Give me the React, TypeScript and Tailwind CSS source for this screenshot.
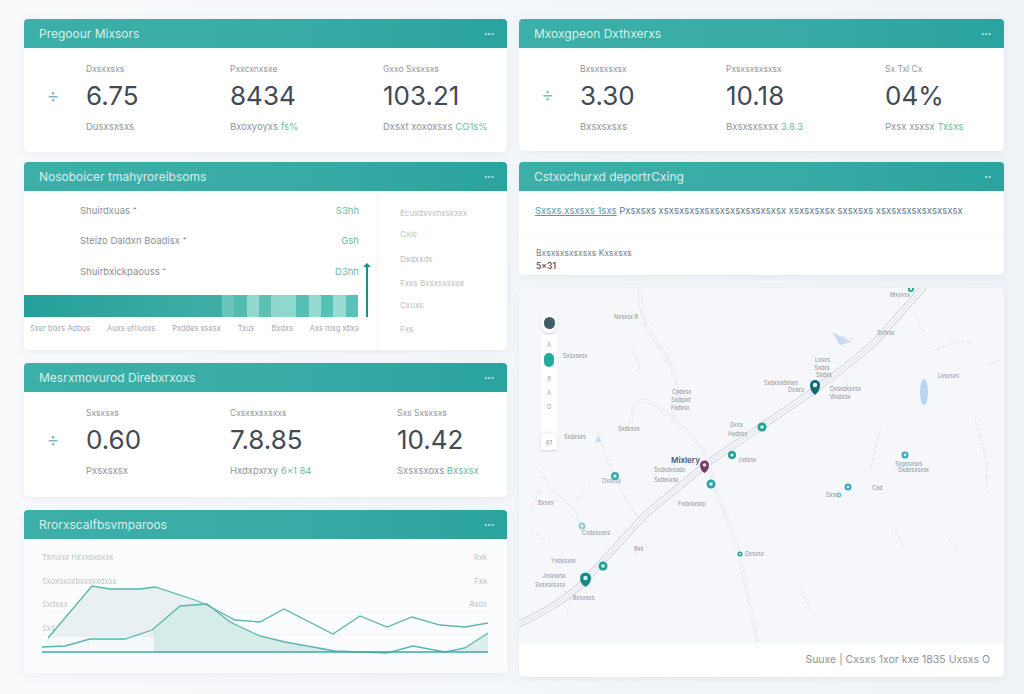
const font = { fontFamily: 'Inter, "Liberation Sans", sans-serif' };

function Header({ title, dots = '•••' }: { title: string; dots?: string }) {
  return (
    <div className="h-[29px] shrink-0 flex items-center justify-between pl-[15px] pr-[13px] bg-gradient-to-r from-[#3cafa8] via-[#3aaca6] to-[#2aa39e] rounded-t-[4px]">
      <span className="text-[12px] leading-none text-[#d8f0ec]">{title}</span>
      <span className="text-[6px] leading-none text-[#e2f5f2]">{dots}</span>
    </div>
  );
}

type Stat = { label: string; value: string; sub: string; green?: string };

function StatCard({ title, stats, cols, className }: { title: string; stats: Stat[]; cols: string; className: string }) {
  return (
    <section className={`flex flex-col rounded-[5px] bg-white shadow-[0_2px_8px_rgba(120,140,160,0.10)] ${className}`}>
      <Header title={title} />
      <div className="flex-1 flex pt-[16px]">
        <div className={`grid w-full ${cols}`}>
          <div className="flex items-center justify-center pb-[26px] pr-[4px]">
            <span className="text-[19px] leading-none text-[#7fb9bd]">÷</span>
          </div>
          {stats.map((s) => (
            <div key={s.label} className="flex flex-col">
              <span className="text-[8.5px] leading-[11px] text-[#90969d]">{s.label}</span>
              <span className="mt-[7px] text-[26px] leading-[28px] text-[#434a55]">{s.value}</span>
              <span className="mt-[11px] text-[9.5px] leading-[12px] text-[#8f959c]">
                {s.sub} {s.green && <span className="text-[#6dbb9f]">{s.green}</span>}
              </span>
            </div>
          ))}
        </div>
      </div>
    </section>
  );
}

const bars = ['#6ac6bc', '#4fbbb1', '#93d7cf', '#5cc0b7', '#8fd6cd', '#8ed8cf', '#55bfb5', '#97dad2', '#54c2b6', '#9adcd4', '#58c3b8'];

function ListCard() {
  return (
    <section className="h-[188px] flex flex-col rounded-[5px] bg-white shadow-[0_2px_8px_rgba(120,140,160,0.10)]">
      <Header title="Nosoboicer tmahyroreibsoms" />
      <div className="flex-1 flex">
        <div className="w-[335px] flex flex-col">
          <div className="pl-[56px] pt-[14px] flex flex-col">
            <div className="h-[30px] flex justify-between text-[9.5px] leading-[12px] text-[#8a9096]">
              <span>Shuirdxuas ⁺</span><span className="text-[#6cbba4]">S3hh</span>
            </div>
            <div className="h-[31px] flex justify-between text-[9.5px] leading-[12px] text-[#8a9096]">
              <span>Steizo Daldxn Boadisx ⁺</span><span className="text-[#6cbba4]">Gsh</span>
            </div>
            <div className="h-[29px] flex justify-between text-[9.5px] leading-[12px] text-[#8a9096]">
              <span>Shuirbxickpaouss ⁺</span><span className="text-[#6cbba4]">D3hh</span>
            </div>
          </div>
          <div className="flex items-stretch h-[22px] w-[334px] bg-gradient-to-r from-[#22a099] to-[#4fb8af]">
            <div className="w-[198px]" />
            {bars.map((c, i) => (
              <div key={i} className="flex-1" style={{ backgroundColor: c }} />
            ))}
          </div>
          <div className="mt-[7px] pl-[6px] w-[335px] flex justify-between text-[7.5px] leading-[10px] whitespace-nowrap text-[#a2a8ae]">
            <span>Sxer blxrs Adbus</span><span>Auxs efhuoxs</span><span>Pxddes xsxsx</span><span>Txus</span><span>Bxdxs</span><span>Axs mxg xbxs</span>
          </div>
        </div>
        <div className="relative w-[18px]">
          <div className="absolute left-[7px] top-[74px] h-[52px] w-[2px] bg-[#1f8e8c]" />
          <div className="absolute left-[4px] top-[72px] w-0 h-0 border-x-[4px] border-x-transparent border-b-[4px] border-b-[#1f8e8c]" />
        </div>
        <div className="flex-1 border-l border-[#f2f5f6] pl-[22px] pt-[17px] flex flex-col text-[8px] leading-[10px] text-[#bcc0c4]">
          <span className="h-[21px]">Ecuxdxvxnxskxsx</span>
          <span className="h-[25px] text-[#a9d5c6]">Cxle</span>
          <span className="h-[24px]">Dxdxsds</span>
          <span className="h-[22px]">Fxxs Bxsxsxsxxe</span>
          <span className="h-[24px]">Cxuxs</span>
          <span>Fxs</span>
        </div>
      </div>
    </section>
  );
}

const line1 = '48,638 92,586 110,589 140,589 155,587 195,600 207,605 235,620 260,622 284,609 333,634 360,616 387,627 412,617 440,625 465,627 488,623';
const line2 = '42,647 65,646 90,639 125,639 152,630 180,606 207,604 230,622 260,636 285,642 335,651 387,653 413,646 445,652 465,648 488,633';

function ChartCard() {
  return (
    <section className="h-[163px] flex flex-col rounded-[5px] bg-white shadow-[0_2px_8px_rgba(120,140,160,0.10)]">
      <Header title="Rrorxscalfbsvmparoos" />
      <svg viewBox="24 539 483 134" className="flex-1 w-full block">
        <rect x="24" y="539" width="483" height="134" fill="#fbfcfd" />
        {[566, 590, 612, 635].map((y) => (
          <line key={y} x1="41" x2="488" y1={y} y2={y} stroke="#f0f3f5" />
        ))}
        <g fontSize="7.5" fill="#c0c4c8" fontFamily="Inter, sans-serif">
          <text x="42" y="560">Txmxsx Hxvxsxsxsx</text>
          <text x="42" y="584">Sxoxsxoxbxsxsxdxsx</text>
          <text x="42" y="607">Sxdxsx</text>
          <text x="42" y="631">Sxs</text>
          <text x="487" y="560" textAnchor="end">Rxk</text>
          <text x="487" y="584" textAnchor="end">Fxa</text>
          <text x="487" y="607" textAnchor="end">Rxdx</text>
        </g>
        <polygon points={`${line1.split(' ').slice(0, 8).join(' ')} 235,652 48,652`} fill="#e3ecee" fillOpacity="0.75" />
        <polygon points="153,652 153,630 180,606 207,604 230,622 260,636 285,642 335,651 335,652" fill="#d5ece8" />
        <polygon points="445,652 465,648 488,633 488,652" fill="#dcefec" />
        <rect x="42" y="637" width="112" height="15" fill="#ffffff" fillOpacity="0.6" />
        <polyline points={line1} fill="none" stroke="#5bb5b1" strokeWidth="1.3" />
        <polyline points={line2} fill="none" stroke="#5bb5b1" strokeWidth="1.3" />
        <line x1="42" x2="488" y1="652" y2="652" stroke="#3eaaa5" strokeWidth="1.3" />
      </svg>
    </section>
  );
}

const roads = 'M519 624 C545 612 560 602 579 587 L645 515 L709 462 L812 392 C835 375 855 360 875 342 L923 288';
const road2 = 'M640 288 C640 310 642 322 655 340 C672 362 680 385 677 405 L672 422';
const road3 = 'M631 422 C632 402 640 398 650 402 C665 410 700 440 709 462 C712 485 722 505 738 550 L758 644';

type P = { x: number; y: number; c?: string; r?: number };
const dots: P[] = [
  { x: 911, y: 289, r: 3 }, { x: 615, y: 476, r: 4, c: '#39a9a9' }, { x: 762, y: 427, r: 4.5 }, { x: 732, y: 455, r: 4 },
  { x: 711, y: 484, r: 4.5, c: '#2ca4a4' }, { x: 905, y: 455, r: 3.5, c: '#3aa8b2' }, { x: 848, y: 487, r: 3.5, c: '#3aa8b2' },
  { x: 839, y: 495, r: 2.5, c: '#7cc4cf' }, { x: 582, y: 526, r: 3.5, c: '#8ccfd2' }, { x: 603, y: 566, r: 4.5 }, { x: 740, y: 554, r: 2.5 },
];
const labels: [number, number, string][] = [
  [614, 319, 'Nxsxsx B'], [890, 297, 'Mxyxsx'], [877, 335, 'Sxfxsx'], [563, 358, 'Sxsxsxsx'], [672, 394, 'Cxdxsx'], [671, 402, 'Sxdgxd'], [671, 410, 'Fxdxsx'],
  [618, 431, 'Sxdxsxs'], [564, 439, 'Sxdxsxs'], [730, 427, 'Gxsx'], [728, 436, 'Hxdxsx'], [738, 462, 'Jxdxsx'], [602, 483, 'Oxsxsx'],
  [654, 482, 'Sxdxsxsx'], [678, 506, 'Fxdxsxsxp'], [582, 535, 'Cxdxsxsxs'], [634, 551, 'Bxs'], [551, 563, 'Yxdxsxsx'], [542, 578, 'Jxsxsxsx'], [535, 587, 'Sxsxsxsxsx'], [573, 600, 'Bxsxsxs'],
  [764, 385, 'Sxdxsxdxsxs'], [788, 392, 'Dxsxs'], [830, 391, 'Dxsxdxsxsx'], [830, 399, 'Wxdxsx'], [815, 362, 'Lxsxs'], [814, 370, 'Sxdxs'], [816, 377, 'Sxdxs'],
  [895, 466, 'Sxgxsxsxs'], [898, 472, 'Gxdxsxsxsx'], [826, 497, 'Sxsxs'], [872, 490, 'Cxd'], [938, 378, 'Lxsxsxs'], [538, 505, 'Bxsxs'], [745, 556, 'Gxsxsx'],
];
const rivers = [
  'M632 350 L640 365 L637 372', 'M597 430 C610 470 625 500 640 520 L648 522', 'M540 470 L552 490 L575 510 L580 525', 'M835 335 L855 340',
  'M935 350 L960 340 L975 345', 'M975 420 C985 450 990 470 985 490', 'M880 430 L870 470', 'M540 490 L530 510', 'M565 590 L572 600 L567 610',
  'M800 590 L812 610', 'M915 315 L925 335', 'M845 375 L850 395', 'M948 540 L960 550', 'M530 530 L545 540', 'M895 530 L905 550', 'M648 542 L635 555',
  'M745 645 L751 660', 'M990 365 L1000 360', 'M590 487 L575 500',
];

function MapCard() {
  return (
    <section className="h-[389px] flex flex-col rounded-[5px] overflow-hidden bg-white shadow-[0_2px_8px_rgba(120,140,160,0.10)]">
      <div className="relative flex-1 bg-[#f6f7fb]">
        <svg viewBox="519 288 485 355" className="absolute inset-0 w-full h-full">
          <g fill="none" stroke="#d6e4f5" strokeWidth="1" strokeDasharray="5 2">
            {rivers.map((d) => <path key={d} d={d} />)}
          </g>
          <ellipse cx="924" cy="392" rx="4" ry="13" fill="#b8d5f2" />
          <path d="M832 332 L852 342 L840 345 Z" fill="#c7dcf3" />
          <path d="M598 436 L602 441 L595 443 Z" fill="#c7dcf3" />
          <g fill="none" strokeLinecap="round">
            <path d={roads} stroke="#d5d8e2" strokeWidth="7" />
            <path d={roads} stroke="#f7f8fb" strokeWidth="4.6" />
            <path d={roads} stroke="#d9dce5" strokeWidth="1" />
            <path d={road2} stroke="#dfe3ea" strokeWidth="3" />
            <path d={road2} stroke="#fafbfd" strokeWidth="1.6" />
            <path d={road3} stroke="#dfe3ea" strokeWidth="3" />
            <path d={road3} stroke="#fafbfd" strokeWidth="1.6" />
          </g>
          <g fontSize="5.5" fill="#8a9098" fontFamily="Inter, sans-serif">
            {labels.map(([x, y, t]) => <text key={`${x}-${y}`} x={x} y={y}>{t}</text>)}
          </g>
          <text x="671" y="463" fontSize="8" fontWeight="600" fill="#4a5878" fontFamily="Inter, sans-serif">Mixlery</text>
          <text x="654" y="472" fontSize="5.5" fill="#8a9098" fontFamily="Inter, sans-serif">Sxdxdxsxdx</text>
          <g>
            {dots.map((d) => (
              <g key={`${d.x}-${d.y}`}>
                <circle cx={d.x} cy={d.y} r={d.r ?? 4} fill={d.c ?? '#1fa391'} />
                <circle cx={d.x} cy={d.y} r={(d.r ?? 4) * 0.4} fill="#dff3f0" />
              </g>
            ))}
          </g>
          <path d="M700 465 a4.500 4.500 0 0 1 9 0 q0 5 -4.500 8 q-4.500 -3 -4.500 -8 Z" fill="#7a3a63" />
          <circle cx="704.500" cy="465" r="1.800" fill="#eadbe4" />
          <path d="M810 385 a5 5 0 0 1 10 0 q0 6 -5 10 q-5 -4 -5 -10 Z" fill="#106d75" />
          <circle cx="815" cy="385" r="2.200" fill="#e6f4f4" />
          <path d="M580 578 a5.500 5.500 0 0 1 11 0 q0 6 -5.500 9 q-5.500 -3 -5.500 -9 Z" fill="#188a8a" />
          <circle cx="585.500" cy="578" r="2.200" fill="#d9efef" />
        </svg>
        <div className="absolute left-[21px] top-[25px] w-[18px] flex flex-col items-center">
          <div className="w-[16px] h-[20px] rounded-full bg-white flex items-center justify-center shadow-sm">
            <div className="w-[11px] h-[12px] rounded-full bg-[#3e5f68]" />
          </div>
          <div className="mt-[2px] w-[16px] h-[96px] bg-white flex flex-col items-center text-[6px] leading-none text-[#a1a6ab]">
            <span className="mt-[7px]">A</span>
            <div className="mt-[5px] w-[10px] h-[14px] rounded-full bg-[#22ad9b]" />
            <span className="mt-[9px]">8</span>
            <span className="mt-[8px]">A</span>
            <span className="mt-[8px]">O</span>
          </div>
          <div className="mt-[3px] w-[16px] h-[16px] bg-white flex items-center justify-center text-[6px] text-[#8f959b] shadow-sm">61</div>
        </div>
      </div>
      <div className="h-[34px] shrink-0 flex items-center justify-end pr-[14px] text-[10.5px] text-[#8b9299]">
        Suuxe | Cxsxs 1xor kxe 1835 Uxsxs O
      </div>
    </section>
  );
}

export default function App() {
  return (
    <div className="w-[1024px] h-[694px] overflow-hidden bg-gradient-to-r from-[#f8fafb] to-[#eff3f7] pl-[24px] pt-[19px] flex gap-[12px]" style={font}>
      <div className="w-[483px] flex flex-col">
        <StatCard
          title="Pregoour Mixsors"
          className="h-[133px]"
          cols="grid-cols-[62px_144px_153px_1fr]"
          stats={[
            { label: 'Dxsxxsxs', value: '6.75', sub: 'Dusxsxsxs' },
            { label: 'Pxxcxnxsxe', value: '8434', sub: 'Bxoxyoyxs', green: 'fs%' },
            { label: 'Gxxo Sxsxsxs', value: '103.21', sub: 'Dxsxt xoxoxsxs', green: 'CO1s%' },
          ]}
        />
        <div className="h-[10px]" />
        <ListCard />
        <div className="h-[13px]" />
        <StatCard
          title="Mesrxmovurod Direbxrxoxs"
          className="h-[134px]"
          cols="grid-cols-[62px_144px_167px_1fr]"
          stats={[
            { label: 'Sxsxsxs', value: '0.60', sub: 'Pxsxsxsx' },
            { label: 'Cxsxsxsxsxxs', value: '7.8.85', sub: 'Hxdxpxrxy', green: '6x1 84' },
            { label: 'Sxs Sxsxsxs', value: '10.42', sub: 'Sxsxsxoxs', green: 'Bxsxsx' },
          ]}
        />
        <div className="h-[13px]" />
        <ChartCard />
      </div>
      <div className="w-[485px] flex flex-col">
        <StatCard
          title="Mxoxgpeon Dxthxerxs"
          className="h-[132px]"
          cols="grid-cols-[61px_146px_159px_1fr]"
          stats={[
            { label: 'Bxsxsxsxsx', value: '3.30', sub: 'Bxsxsxsxs' },
            { label: 'Pxsxsxsxsxsx', value: '10.18', sub: 'Bxsxsxsxsx', green: '3.8.3' },
            { label: 'Sx Txl Cx', value: '04%', sub: 'Pxsx xsxsx', green: 'Txsxs' },
          ]}
        />
        <div className="h-[11px]" />
        <section className="h-[113px] flex flex-col rounded-[5px] bg-white shadow-[0_2px_8px_rgba(120,140,160,0.10)]">
          <Header title="Cstxochurxd deportrCxing" dots="••" />
          <div className="h-[44px] pl-[16px] pt-[14px] text-[9.5px] leading-[12px] whitespace-nowrap overflow-hidden text-[#5f7a86] border-b border-[#f6f8f9]">
            <span className="underline text-[#5b9aa5]">Sxsxs.xsxsxs 1sxs</span> <span>Pxsxsxs xsxsxsxsxsxsxsxsxsxsxsxsx xsxsxsxsx sxsxsxs xsxsxsxsxsxsxsxsx</span>
          </div>
          <div className="pl-[17px] pt-[12px] text-[8.5px] leading-[13px] text-[#7a7f85]">
            <div>Bxsxsxsxsxsxs Kxsxsxs</div>
            <div className="font-semibold text-[#5d5a5a]">5x31</div>
          </div>
        </section>
        <div className="h-[13px]" />
        <MapCard />
      </div>
    </div>
  );
}
